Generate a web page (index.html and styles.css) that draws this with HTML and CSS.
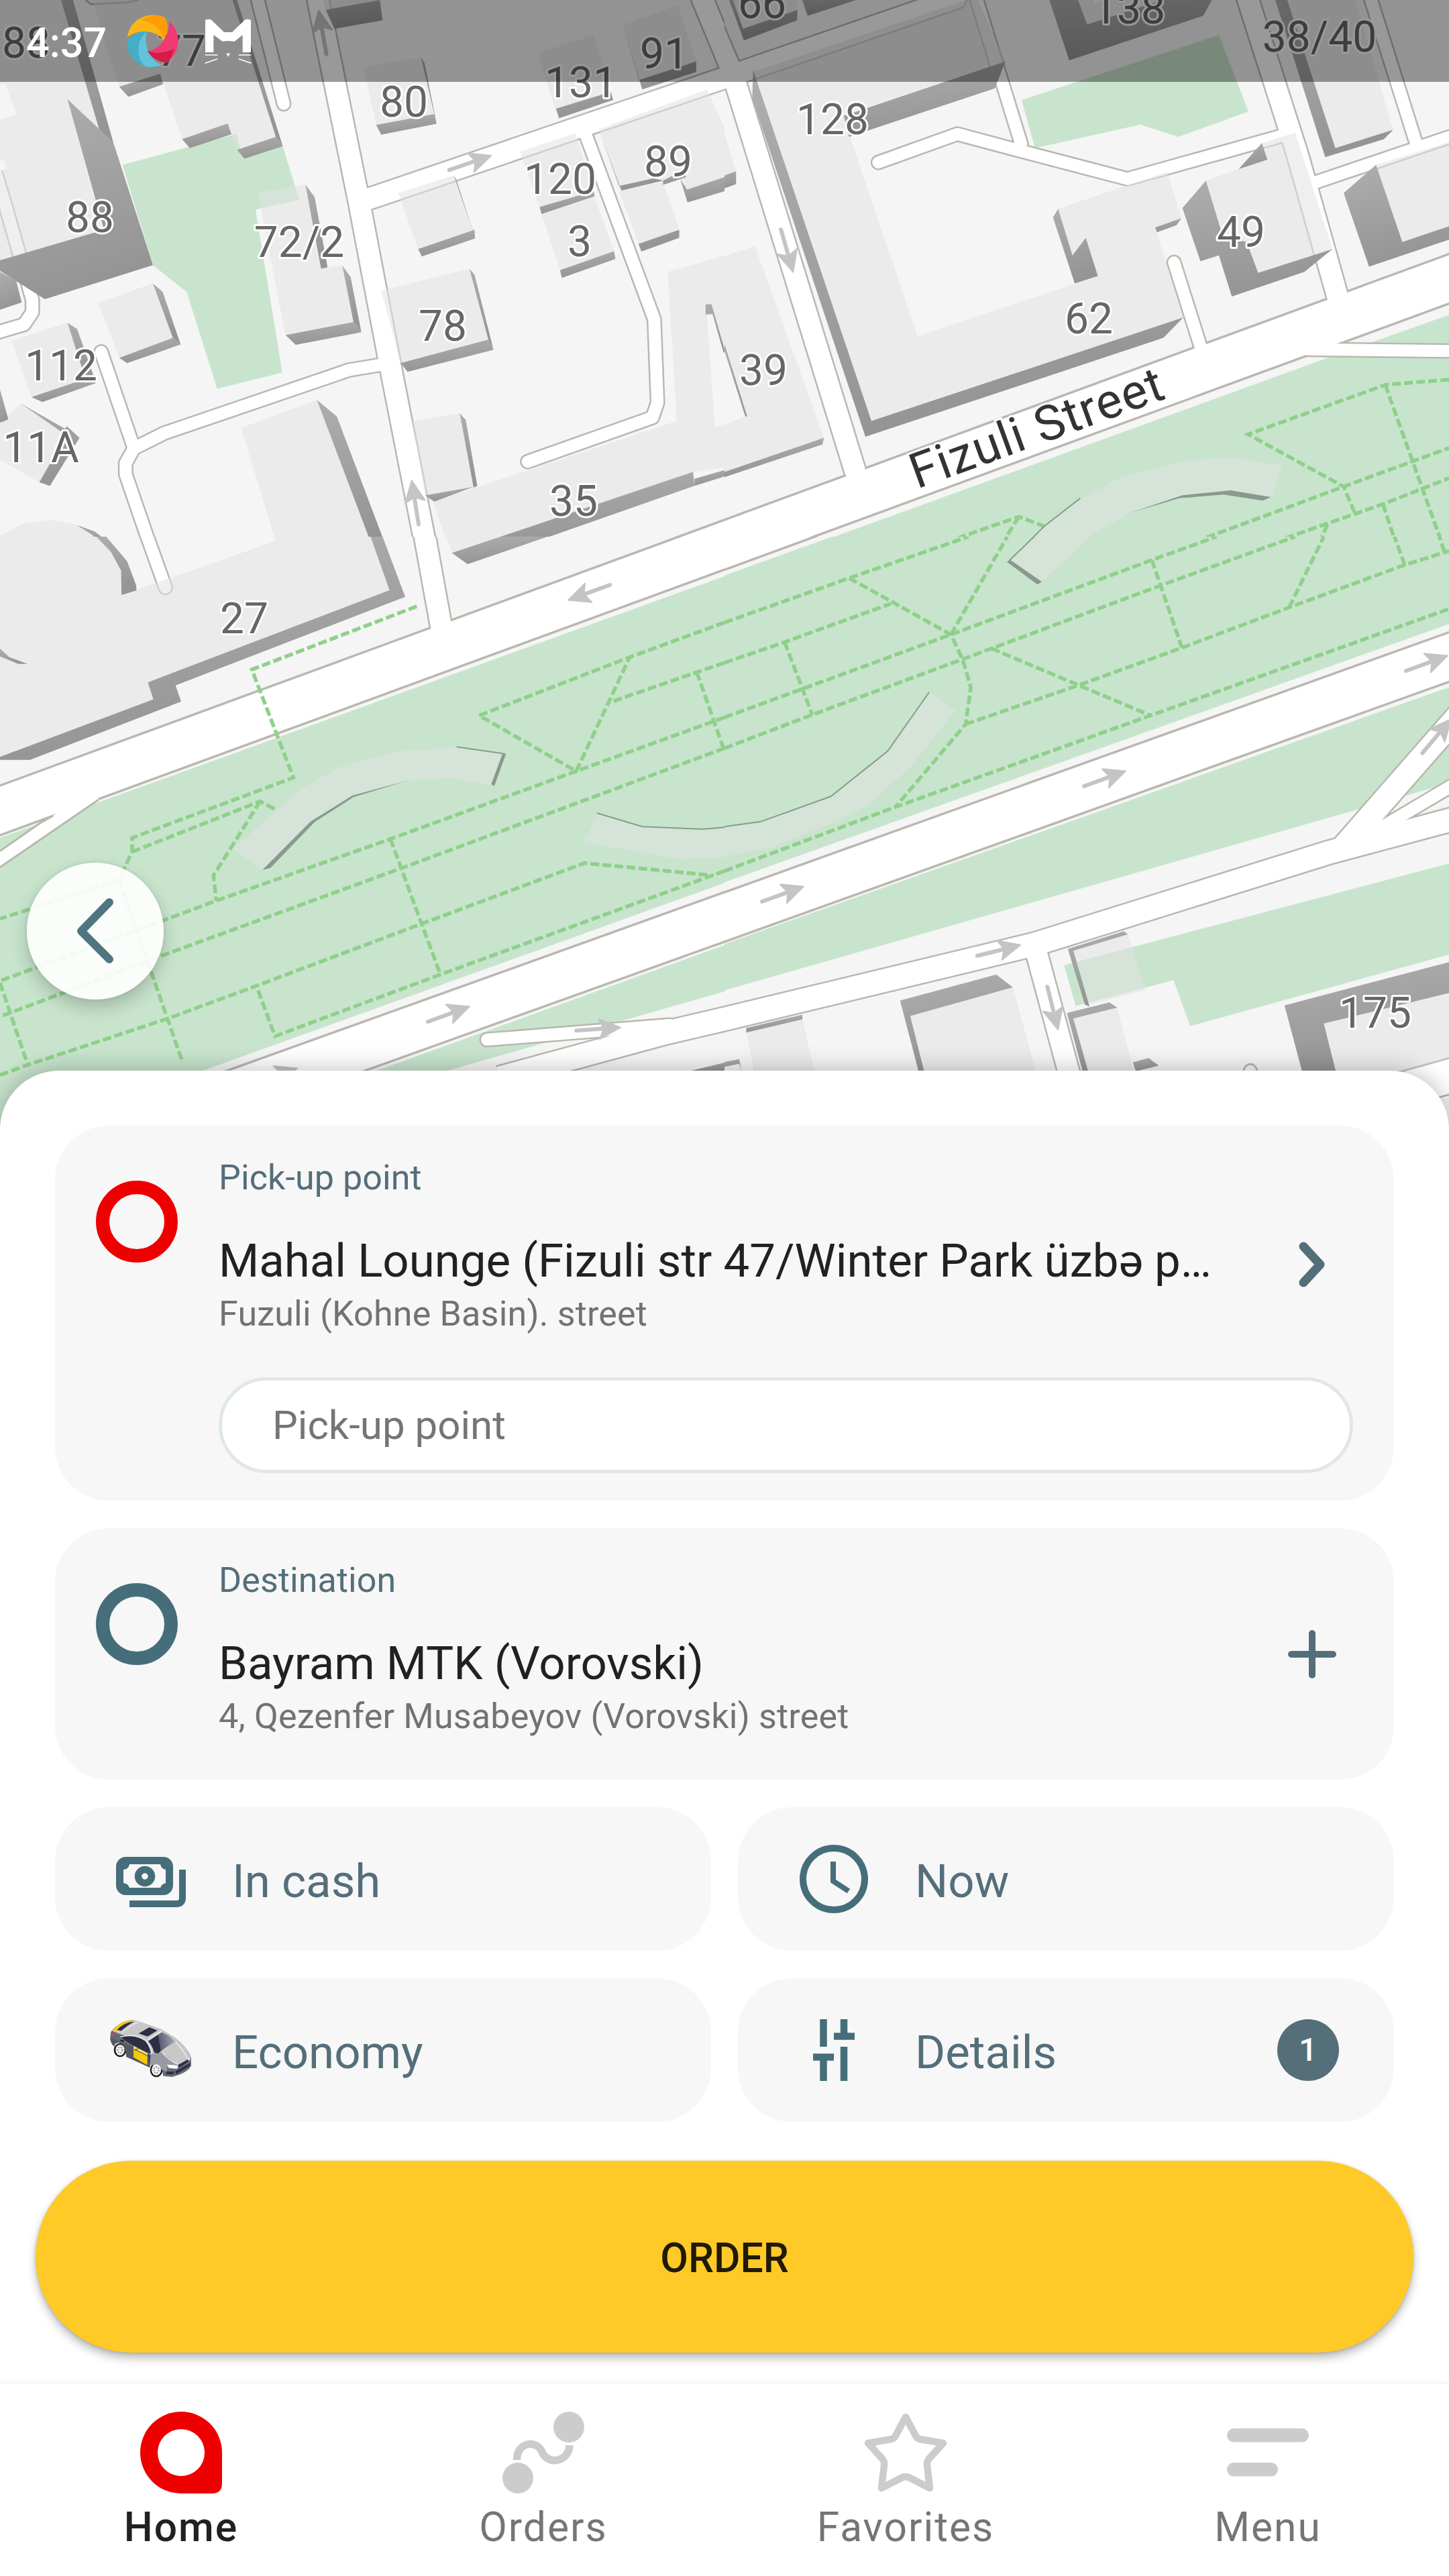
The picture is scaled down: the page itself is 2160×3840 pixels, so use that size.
FILE: index.html
```html
<!DOCTYPE html>
<html lang="en">
<head>
<meta charset="utf-8">
<title>Order a taxi</title>
<link rel="stylesheet" href="styles.css">
</head>
<body>
<div class="screen">
  <section class="map">
    <svg class="map-canvas" width="2160" height="1700" viewBox="0 0 2160 1700">
      <defs>
        <linearGradient id="wall" x1="0" y1="0" x2=".25" y2="1">
          <stop offset="0" stop-color="#aeaeae"/><stop offset="1" stop-color="#959595"/>
        </linearGradient>
        <g id="arrow">
          <path d="M-32 0H10" stroke="#c4c4c4" stroke-width="6" stroke-linecap="round"/>
          <path d="M34 0L2 -15L9 0L2 15Z" fill="#c4c4c4" stroke="#c4c4c4" stroke-width="2" stroke-linejoin="round"/>
        </g>
        <g id="nw-roads">
          <path class="mid" d="M686 -15L777 575L845 1045L928 1600M800 566L1588 213L1518 -10"/>
          <path class="minor" d="M556 -10L614 296M1268 385L1416 910L1423 1148L1412 1190L1142 1316M845 1035L755 1055L355 1235L290 1278L272 1320V1352L334 1590M290 1278L219 1003M-20 953L52 925L70 890V855L15 600L-10 490"/>
          <path class="major" d="M0 2310L3136 795"/>
        </g>
        <g id="ne-roads">
          <path class="mid" d="M-60 -30L20 220L282 1340M-60 249L500 -5M1132 -5L1240 440L1332 870"/>
          <path class="minor" d="M546 0L642 410M333 463L504 382L640 430L872 510L1225 380M1260 528L1590 381M1397 -10L1496 405M973 748L1032 995"/>
          <path class="major" d="M-1568 2310L1590 784"/>
          <path class="minor" d="M1262 996L1600 1001"/>
        </g>
        <g id="sw-roads">
          <path class="mid" d="M918 -10L955 240"/>
          <path class="minor" d="M310 -30L358 135M1054 1336L1450 1297"/>
          <path class="major" d="M-60 754L3136 -684M1600 996L-40 1718"/>
          <path class="wide" d="M1600 1272L1440 1318L1080 1438"/>
        </g>
        <g id="se-roads">
          <path class="minor" d="M1370 810L1590 650"/>
          <path class="mid" d="M672 1090L748 1435"/>
          <path class="wide" d="M-20 1287L670 1083L1310 838L1590 746M1335 830L1600 458"/>
          <path class="major" d="M-80 58L200 -68M-20 1019L1590 310"/>
        </g>
      </defs>

      <!-- north-west tile -->
      <svg width="1080" height="820" viewBox="0 0 1568 1568" preserveAspectRatio="none">
        <rect class="land" width="1568" height="1568"/>
        <path class="park" d="M265 470L512 382L520 425L612 418L648 570L553 597L611 1062L470 1108L404 832L331 756Z"/>
        <use class="casing" href="#nw-roads"/><use class="road" href="#nw-roads"/>
        <path class="edge" d="M185 0L197 12L275 7L300 0"/>
        <g class="roof">
          <path d="M-5 -5H132L216 375L146 283L222 655L0 742Z"/>
          <path d="M200 0H503L597 390L513 427L493 352L394 397L347 210L258 247Z"/>
          <path d="M787 192L911 163L940 327L814 356ZM700 0H820L705 28Z"/>
          <path d="M1164 152L1284 100L1322 262L1203 310ZM1348 72L1467 15L1507 175L1383 228Z"/>
          <path d="M1297 368L1530 255L1580 400V505L1487 540L1472 505L1435 518L1340 540ZM1340 543L1435 520L1470 655L1382 695Z"/>
          <path d="M1125 432L1245 380L1285 545L1168 590ZM1172 610L1287 562L1329 716L1212 770Z"/>
          <path d="M862 550L982 500L1025 657L905 710ZM825 829L1016 766L1058 970L867 1035Z"/>
          <path d="M558 549L661 526L697 765L741 757L765 920L618 955Z"/>
          <path d="M213 863L331 808L374 963L258 1020ZM25 972L146 920L185 1080L68 1132Z"/>
          <path d="M45 1150L140 1222V1240L85 1375L0 1310V1210Z"/>
          <path d="M522 1220L686 1140L812 1580L606 1590L597 1545L540 1568L535 1580L605 1580Z"/>
          <path d="M-5 1530L50 1493L108 1482L165 1496L200 1525L235 1580H-5Z"/>
          <path d="M893 1200L995 1178L1025 1388L920 1412Z"/>
          <path d="M938 1430L1465 1200L1445 775L1580 725V1330L1500 1345L975 1580Z"/>
        </g>
        <path class="land" d="M0 240H12L35 325L0 342ZM0 455H8L15 483L0 487ZM1530 895H1545L1580 1060V1205L1547 1217Z"/>
        <g class="wall">
          <path d="M132 0H158L245 405L216 375Z"/>
          <path d="M146 283L245 405L331 756L97 853L0 772V742L225 655Z"/>
          <path d="M0 775L35 800L47 862L0 883Z"/>
          <path d="M258 247L347 210L353 240L278 276Z"/><path d="M394 397L493 352L501 383L411 422Z"/>
          <path d="M503 0H513L612 417L597 390Z"/><path d="M513 427L597 390L612 417L529 452Z"/>
          <path d="M705 28L822 0L828 58L724 82Z"/>
          <path d="M911 163L919 180L945 353L940 325Z"/><path d="M814 356L940 325L945 353L825 384Z"/>
          <path d="M1164 152L1203 310L1322 262L1327 285L1210 337Z"/>
          <path d="M1348 72L1383 228L1507 175V205L1390 255Z"/>
          <path d="M1297 372L1340 530L1415 508L1435 515L1345 543Z"/>
          <path d="M1435 515L1480 485L1485 505L1435 527Z"/>
          <path d="M1472 510L1487 540L1568 505V545L1488 577Z"/>
          <path d="M1340 540L1382 695L1470 655V678L1388 717Z"/>
          <path d="M1168 590L1285 545L1287 560L1172 610Z"/><path d="M1212 770L1329 716L1332 738L1216 792Z"/>
          <path d="M982 500L988 512L1028 680L1023 657Z"/><path d="M905 710L1027 655L1028 680L913 731Z"/>
          <path d="M1016 766L1027 783L1068 997L1057 968Z"/><path d="M867 1035L1057 968L1068 997L882 1060Z"/>
          <path d="M661 526L681 562L709 762L695 766Z"/><path d="M741 757L759 790L782 947L765 918Z"/><path d="M618 955L765 918L782 947L640 983Z"/>
          <path d="M331 808L352 832L391 982L374 963Z"/><path d="M258 1020L374 963L391 982L275 1035Z"/>
          <path d="M146 920L167 938L208 1092L185 1080Z"/><path d="M68 1132L185 1080L208 1092L92 1146Z"/>
          <path d="M0 1110L18 1195L0 1205Z"/>
          <path d="M45 1150L140 1222L145 1215L172 1248L108 1385L85 1375L143 1240Z"/>
          <path d="M686 1140L729 1187L842 1580H812Z"/><path d="M165 1496L205 1515L235 1545L262 1580H232L200 1525Z"/>
          <path d="M995 1178L1008 1197L1033 1385L1025 1390Z"/><path d="M920 1412L1025 1388L940 1430Z"/>
          <path d="M1500 1345L1503 1385L1080 1580H970Z"/><path d="M1503 1385V1365L1568 1340V1358Z"/>
          <path d="M1527 867H1540L1570 1005H1566L1542 895L1527 897Z"/>
        </g>
      </svg>

      <!-- north-east tile -->
      <svg x="1080" width="1080" height="820" viewBox="0 0 1568 1568" preserveAspectRatio="none">
        <rect class="land" width="1568" height="1568"/>
        <path class="park" d="M643 285L1070 100L1134 318L982 390L900 355L672 422ZM158 1568L1310 1018L1580 892V1568Z"/>
        <use class="casing" href="#ne-roads"/><use class="road" href="#ne-roads"/>
        <g class="trail">
          <path d="M430 1568L637 1473L692 1500M637 1473L592 1568M1568 1082L1430 1097L1133 1238L1340 1387L1365 1465M1430 1097L1558 1568M970 1568L1340 1387L1568 1277M1140 1568L1425 1437L1568 1363M1305 1495L1280 1568M1425 1437L1458 1568"/>
        </g>
        <g class="roof">
          <path d="M62 205L545 -10L608 175L255 328L272 390L312 548L418 958L808 787L782 678L752 730L722 595L958 490L989 622L932 648L993 905L318 1200L62 260Z"/>
          <path d="M1042 515L1113 482L1175 455L1163 408L1235 378L1316 710L1155 778L1130 690L1078 672Z"/>
          <path d="M1410 470L1568 405V645L1467 690ZM1218 0H1365L1447 370L1322 422ZM765 0H970L785 70ZM15 0H155L158 28L40 82Z"/>
          <path d="M0 380L25 488L0 500ZM-5 732L66 702L215 1248L0 1345Z"/>
          <path d="M640 1568L692 1500L780 1415L860 1360L985 1315L1100 1303L1207 1327L1187 1415L1095 1398L990 1412L875 1465L800 1520L762 1568Z"/>
        </g>
        <path class="land" d="M0 985L47 1187L0 1210Z"/>
        <g class="wall">
          <path d="M62 200L60 280L305 1245L950 963L993 905L318 1200Z"/>
          <path d="M258 330L608 175L585 252L270 390Z"/>
          <path d="M722 595L711 620L758 808L808 787L782 678L753 728Z"/>
          <path d="M932 648L989 622L978 642L936 662Z"/>
          <path d="M1163 408L1175 455L1113 482Z"/>
          <path d="M1042 515L991 593L1030 745L1070 728L1098 845L1255 775L1316 710L1155 778L1130 690L1078 672Z"/>
          <path d="M1410 470L1340 550L1395 760L1568 683V645L1467 690Z"/>
          <path d="M1192 0H1218L1322 422L1447 370L1427 397L1300 448Z"/>
          <path d="M703 0H765L785 70L960 -5H1057L1036 45L746 172Z"/>
          <path d="M10 0H18L40 82L158 28L157 58L42 115Z"/><path d="M168 0H285L180 45Z"/>
          <path d="M0 500L25 488V525L0 537Z"/><path d="M0 1345L215 1248L212 1267L0 1360Z"/><path d="M0 980L49 1187H45L0 1000Z"/>
        </g>
        <path class="shade" d="M875 1463L990 1412L1095 1398L1183 1417L1165 1427L1080 1410L985 1420Z"/>
        <path class="hairline" d="M640 1568L692 1500L770 1420"/>
      </svg>

      <!-- south-west tile -->
      <svg y="800" width="1080" height="880" viewBox="0 0 1568 1568" preserveAspectRatio="none">
        <rect class="land" width="1568" height="1568"/>
        <path class="park" d="M0 800L1568 105V920L435 1420L350 1568H0ZM1568 1085L800 1425H950L1568 1208Z"/>
        <use class="casing" href="#sw-roads"/><use class="road" href="#sw-roads"/>
        <path class="road-fill" d="M215 696L0 877V835L88 760L118 738L160 690Z"/>
        <path class="edge" d="M213 699L0 878M115 741L85 762L0 835"/>
        <g class="trail">
          <path d="M902 185L545 353L635 640L286 800V835L258 912L0 1015M286 837L563 703L600 727M563 703L462 900L468 967M1568 480L1247 623L845 803L468 967L0 1180M1568 562L870 880L350 1113L0 1275M1568 228L1363 320L1037 475L1247 623L1363 320M1568 335L1508 360L1320 440M1508 360L1568 570M845 803L913 1030L953 1163M0 1430L60 1403L363 1280L555 1193L913 1028L1265 867L1545 900M1568 888L953 1163L595 1327L555 1193M258 912L395 1395M0 1185L60 1403"/>
        </g>
        <g class="roof">
          <path d="M0 0H208L240 40L262 90L263 155L595 12L592 0H802L843 142L320 387L332 432L0 585V318L40 338H60L20 320L0 297Z"/>
          <path d="M966 0H1083L978 43Z"/>
          <path d="M503 830L600 725L650 670L735 612L860 570L990 558L1093 577L1065 660L975 643L885 648L762 690L675 757L568 885Z"/>
          <path d="M1295 735L1390 770L1520 777L1568 772V852L1470 857L1263 812Z"/>
        </g>
        <g class="wall">
          <path d="M802 0H828L877 160L380 395L392 438L65 593H0V585L332 432L320 387L843 142Z"/>
          <path d="M208 0H230L275 65L295 130V143L263 155L262 90L240 40Z"/>
          <path d="M0 297L20 320L60 338H40L0 318Z"/>
          <path d="M978 43L1083 0H1185L1012 73Z"/><path d="M1490 1420L1568 1397V1420Z"/>
        </g>
        <path class="shade" d="M1087 578L1095 577L1070 662L1063 658ZM568 885L672 757L762 688L885 647L765 692L682 757L585 880Z"/>
        <path class="hairline" d="M988 558L1093 577M1292 734L1390 770L1520 777L1568 772"/>
      </svg>

      <!-- south-east tile -->
      <svg x="1080" y="800" width="1080" height="880" viewBox="0 0 1568 1568" preserveAspectRatio="none">
        <rect class="land" width="1568" height="1568"/>
        <path class="park" d="M0 103L233 0H1568V232L0 918ZM0 1082L1568 400V655L1350 732L0 1205ZM735 1138L1568 868V1110L1008 1300L972 1178L760 1247Z"/>
        <use class="casing" href="#se-roads"/><use class="road" href="#se-roads"/>
        <path class="road-fill" d="M1450 1425L1568 1385V1490L1540 1495Z"/>
        <path class="edge" d="M1450 1425L1568 1385M1545 1490L1568 1482M1123 1425C1123 1393 1153 1393 1153 1425"/>
        <g class="trail">
          <path d="M0 228L270 110L528 0M270 110L490 260L515 325L533 400L522 498L370 718M0 335L130 280L360 178M130 280L190 473M0 480L490 260L925 62L1065 0M0 562L190 473L578 297L943 130L1235 0M490 260L612 0M578 297L922 475M522 498L770 393L990 295L1222 188L1472 75L1568 38M0 888L370 718L922 475L1568 192M925 62L990 295M1222 188L1297 0M1472 75L1450 0M1558 40L1547 0"/>
        </g>
        <g class="roof">
          <path d="M755 1100L873 1056L912 1205L790 1243ZM402 1273L624 1197L675 1425H432ZM47 1317L169 1282L195 1425H65ZM755 1280L850 1251L887 1425H787ZM1297 1293L1568 1212V1385L1450 1425H1323Z"/>
          <path d="M443 413L501 460L408 605L315 710L262 745L105 825L0 850V770L78 757L230 690L353 570Z"/>
          <path d="M618 65L670 0H792L687 120Z"/>
        </g>
        <g class="wall">
          <path d="M743 1095L864 1048L873 1056L755 1100L790 1248L780 1243Z"/>
          <path d="M380 1232L588 1163L624 1197L402 1273L432 1420H420Z"/>
          <path d="M47 1305L168 1270L169 1282L47 1317Z"/><path d="M0 1395L32 1388L37 1420L32 1400L0 1408Z"/>
          <path d="M741 1265L833 1237L850 1251L755 1280L787 1420H775Z"/>
          <path d="M884 1396L918 1385L940 1405L890 1420Z"/>
          <path d="M1212 1245L1568 1130V1212L1297 1293L1323 1420H1250Z"/>
        </g>
        <path class="shade" d="M611 67L620 63L687 120L677 127Z"/>
        <path class="hairline" d="M615 65L670 0M443 413L353 570L230 690L78 757L0 770"/>
      </svg>

      <use href="#arrow" transform="translate(481 49) rotate(-100)"/>
      <use href="#arrow" transform="translate(700 243) rotate(-19)"/>
      <use href="#arrow" transform="translate(619 750) rotate(-99)"/>
      <use href="#arrow" transform="translate(1173 373) rotate(74)"/>
      <use href="#arrow" transform="translate(879 883) rotate(160)"/>
      <use href="#arrow" transform="translate(668 1512) rotate(-20)"/>
      <use href="#arrow" transform="translate(891 1534) rotate(-4)"/>
      <use href="#arrow" transform="translate(1166 1333) rotate(-20)"/>
      <use href="#arrow" transform="translate(1646 1161) rotate(-20)"/>
      <use href="#arrow" transform="translate(2126 989) rotate(-20)"/>
      <use href="#arrow" transform="translate(1488 1417) rotate(-14)"/>
      <use href="#arrow" transform="translate(1569 1502) rotate(76)"/>
      <use href="#arrow" transform="translate(2141 1098) rotate(-50)"/>
      <use href="#arrow" transform="translate(411 1604) rotate(-20)"/>

      <g class="house">
        <text x="39" y="86">88</text><text x="271" y="98">77</text><text x="602" y="174">80</text>
        <text x="866" y="145">131</text><text x="990" y="102">91</text><text x="835" y="289">120</text>
        <text x="996" y="263">89</text><text x="134" y="346">88</text><text x="446" y="383">72/2</text>
        <text x="864" y="382">3</text><text x="660" y="508">78</text><text x="91" y="567">112</text>
        <text x="61" y="689">11A</text><text x="855" y="769">35</text><text x="1136" y="27">66</text>
        <text x="1683" y="35">138</text><text x="1967" y="77">38/40</text><text x="1241" y="200">128</text>
        <text x="1850" y="368">49</text><text x="1623" y="497">62</text><text x="1138" y="574">39</text>
        <text x="364" y="944">27</text><text x="2050" y="1532">175</text>
      </g>
      <text class="street" transform="translate(1367 729) rotate(-20)" textLength="397">Fizuli Street</text>
    </svg>

    <header class="status">
      <span class="time">4:37</span>
      <svg width="78" height="78" viewBox="57 36 234 234">
        <path d="M60 135C68 62 148 16 228 48C246 80 240 122 223 150C190 106 116 96 60 135Z" fill="#fdb515"/>
        <path d="M120 62C170 66 214 96 223 150C240 122 246 80 228 48C190 34 150 40 120 62Z" fill="#fd9c07"/>
        <path d="M58 158C78 122 112 108 148 112C132 160 150 232 213 262C130 290 58 236 58 158Z" fill="#46adc9"/>
        <path d="M148 112C104 140 92 222 138 266C164 272 190 270 213 262C150 232 132 160 148 112Z" fill="#62c3dc"/>
        <path d="M247 64C302 116 302 196 238 250C204 250 170 230 149 198C206 190 248 138 247 64Z" fill="#f03a70"/>
        <path d="M149 198C192 214 240 204 268 188C262 216 252 236 238 250C204 250 170 230 149 198Z" fill="#d51c48"/>
      </svg>
      <svg class="cat" width="72" height="78" viewBox="405 36 216 234">
        <path d="M408 60Q420 54 434 58L492 114H528L586 58Q600 54 612 60V204H575V126L538 156Q510 150 486 156L445 126V204H408Z" fill="#fff"/>
        <path d="M409 216H461M409 252L461 234M611 216H559M611 252L559 234M506 211H515L510.500 219Z" stroke="#fff" stroke-width="5" fill="#fff" stroke-linecap="round"/>
      </svg>
    </header>

    <button class="back" aria-label="Back">
      <svg width="204" height="204" viewBox="0 0 204 204"><path d="M123 59L81 102L123 144"/></svg>
    </button>
  </section>

  <main class="panel">
    <section class="card">
      <span class="ring ring-red"></span>
      <div class="card-body">
        <div class="card-head">
          <div class="card-text">
            <div class="label">Pick-up point</div>
            <div class="title">Mahal Lounge (Fizuli str 47/Winter Park üzbə p…</div>
            <div class="sub">Fuzuli (Kohne Basin). street</div>
          </div>
          <svg class="act" width="80" height="80" viewBox="0 0 80 80"><path d="M26 13L51 40L26 67" stroke-width="13"/></svg>
        </div>
        <div class="field">Pick-up point</div>
      </div>
    </section>

    <section class="card card-dest">
      <span class="ring"></span>
      <div class="card-body">
        <div class="card-head">
          <div class="card-text">
            <div class="label">Destination</div>
            <div class="title">Bayram MTK (Vorovski)</div>
            <div class="sub">4, Qezenfer Musabeyov (Vorovski) street</div>
          </div>
          <svg class="act" width="80" height="80" viewBox="0 0 80 80"><path d="M8 36H70M39 5V67" stroke-width="10"/></svg>
        </div>
      </div>
    </section>

    <section class="options">
      <div class="option">
        <svg class="line" width="170" height="140" viewBox="0 0 170 140">
          <rect x="38.500" y="42.500" width="74" height="46" rx="9" stroke-width="11"/>
          <circle cx="76" cy="66" r="10" stroke-width="10.500"/>
          <path d="M44 56Q52 55 53 48H44ZM108 56Q100 55 99 48H108ZM44 76Q52 77 53 84H44ZM108 76Q100 77 99 84H108Z" fill="#456e7a" stroke="none"/>
          <path d="M132 56V98Q132 107 123 107H53" stroke-width="10"/>
        </svg>
        <span>In cash</span>
      </div>
      <div class="option">
        <svg class="line" width="170" height="140" viewBox="0 0 170 140">
          <circle cx="85" cy="70" r="46" stroke-width="10"/><path d="M84 44V73L107 88" stroke-width="8"/>
        </svg>
        <span>Now</span>
      </div>
      <div class="option">
        <svg width="170" height="140" viewBox="0 18 510 420">
          <defs><linearGradient id="glass" gradientUnits="userSpaceOnUse" x1="243" y1="200" x2="362" y2="180"><stop offset=".4" stop-color="#2d2e44"/><stop offset=".43" stop-color="#5d5e74"/><stop offset="1" stop-color="#a8a8b8"/></linearGradient></defs>
          <ellipse cx="117" cy="228" rx="28" ry="31" fill="#1b1b1b"/><ellipse cx="279" cy="317" rx="28" ry="32" fill="#1b1b1b"/>
          <path d="M75 150L80 140Q130 92 175 94L205 102L300 135L365 175Q425 225 434 262L435 298Q420 330 350 348L310 344Q302 285 262 282Q250 290 250 306L145 258Q146 205 112 195Q90 195 92 212Q74 200 73 175Z" fill="#666875"/>
          <path d="M73 172L250 245V306L145 258Q140 200 112 195Q92 195 92 212Q74 200 73 172Z" fill="#555764"/>
          <path d="M80 142Q130 92 175 94L205 102L300 135L365 175Q425 225 432 262L375 295H330L250 248Q235 180 125 160Z" fill="#c8c8c8"/>
          <path d="M255 245L305 238L375 294L330 297L325 325L250 290Z" fill="#9799a4"/>
          <path d="M83 140Q120 98 165 94L175 97Q130 108 100 144Z" fill="#f8c80a"/>
          <path d="M103 138Q130 106 180 100Q150 118 122 142Z" fill="#2d2e44"/>
          <path d="M80 148L96 164L80 166Z" fill="#e8365f"/>
          <path d="M200 154L248 126L284 140L240 167Z" fill="#2d2e44"/>
          <path d="M243 188L303 149Q340 160 362 191Q310 222 287 243L270 240Q262 210 243 188Z" fill="url(#glass)"/>
          <path d="M120 172Q180 155 228 187Q250 210 255 244Q180 215 120 172Z" fill="#2d2e44"/>
          <path d="M118 170Q180 150 232 185Q256 210 258 246M125 152Q155 120 202 102M305 238Q330 270 375 292M365 192Q400 225 416 262M240 182L303 142" fill="none" stroke="#f1f1f1" stroke-width="4"/>
          <path d="M178 210L240 243L238 295L177 260Z" fill="#f8c80a"/><path d="M178 210L240 243V254L178 225Z" fill="#ffe07a"/>
          <path d="M180 224L250 258M184 228L200 221" stroke="#2d2e44" stroke-width="3"/>
          <path d="M250 248L248 285" stroke="#2d2e44" stroke-width="3"/><path d="M118 184L134 189" stroke="#1b1b1b" stroke-width="6"/>
          <path d="M327 293L378 297L372 312L335 308Z" fill="#fff"/><path d="M418 268L430 260L428 276Z" fill="#fff"/>
          <path d="M374 296L420 272L422 280L384 305ZM325 325L362 324L352 337L322 335ZM366 322L432 285L428 300L366 337Z" fill="#2d2e44"/>
          <ellipse cx="117" cy="228" rx="20" ry="24" fill="#f4f4f4"/><ellipse cx="279" cy="317" rx="21" ry="25" fill="#f4f4f4"/>
          <g fill="none" stroke="#999" stroke-width="7" stroke-dasharray="6 5"><ellipse cx="117" cy="228" rx="10" ry="13"/><ellipse cx="279" cy="317" rx="11" ry="14"/></g>
        </svg>
        <span>Economy</span>
      </div>
      <div class="option">
        <svg class="line" width="170" height="140" viewBox="0 0 170 140">
          <path d="M69.500 24V65M100 24V50M85 49.500H116M54 80.500H85M69.500 80V116M100 65V116" stroke-width="10.500"/>
        </svg>
        <span>Details</span>
        <b class="badge">1</b>
      </div>
    </section>

    <button class="order">ORDER</button>
  </main>

  <nav class="tabs">
    <a class="tab tab-active">
      <svg width="124" height="124" viewBox="0 0 124 124"><path fill="#e00" fill-rule="evenodd" d="M62 1A61 61 0 0 0 62 123H108Q123 123 123 108V62A61 61 0 0 0 62 1ZM62 27A35 35 0 0 1 62 97A35 35 0 0 1 62 27Z"/></svg>
      <span>Home</span>
    </a>
    <a class="tab">
      <svg width="124" height="124" viewBox="0 0 124 124"><g fill="#ccc"><circle cx="100" cy="24" r="23"/><circle cx="24" cy="100" r="23"/></g><path d="M22.500 73C22.500 46 52 42 60 61C69 82 100 76 101 51" fill="none" stroke="#ccc" stroke-width="11.500"/></svg>
      <span>Orders</span>
    </a>
    <a class="tab">
      <svg width="124" height="124" viewBox="0 0 124 124"><path d="M62 9L77 37Q79 41 83 42L118 48L97 71Q93 76 94 81L98 115L67 99Q62 97 57 99L26 115L30 81Q31 76 27 71L6 48L41 42Q45 41 47 37Z" fill="none" stroke="#ccc" stroke-width="10.500" stroke-linejoin="round"/></svg>
      <span>Favorites</span>
    </a>
    <a class="tab">
      <svg width="124" height="124" viewBox="0 0 124 124"><g fill="#ccc"><rect x="1" y="26" width="122" height="20.500" rx="10"/><rect x="1" y="77" width="76" height="20.500" rx="10"/></g></svg>
      <span>Menu</span>
    </a>
  </nav>
</div>
</body>
</html>
```
FILE: styles.css
```css
* { box-sizing: border-box; }
body { margin: 0; font-family: Roboto, "Noto Sans", sans-serif; background: #fff; }
button { border: 0; padding: 0; font: inherit; }
svg { display: block; flex: none; }
.screen { width: 2160px; height: 3840px; display: flex; flex-direction: column; overflow: hidden; }

/* map */
.map { position: relative; height: 1596px; flex: none; }
.map-canvas .land { fill: #f5f5f5; }
.map-canvas .park { fill: #c8e4cd; }
.major, .mid, .minor, .wide { fill: none; stroke-linejoin: round; vector-effect: non-scaling-stroke; }
.mid, .minor { stroke-linecap: round; }
.casing { --grow: 5px; stroke: #b9b8b0; }
.road { --grow: 0px; stroke: #fff; }
.major { stroke-width: calc(66px + var(--grow) * 1.4); }
.wide { stroke-width: calc(34px + var(--grow)); }
.mid { stroke-width: calc(31px + var(--grow)); }
.minor { stroke-width: calc(18px + var(--grow)); }
.road-fill { fill: #fff; }
.edge { fill: none; stroke: #b9b8b0; stroke-width: 3px; vector-effect: non-scaling-stroke; }
.roof { fill: #e1e1e1; fill-opacity: .55; }
.wall path { fill: url(#wall); }
.shade { fill: #8a998d; }
.hairline { fill: none; stroke: #82a086; stroke-width: 2px; vector-effect: non-scaling-stroke; }
.trail path { fill: none; stroke: #8fd08a; stroke-width: 5.5px; stroke-dasharray: 13px 5px; vector-effect: non-scaling-stroke; }
.house { font-size: 64px; text-anchor: middle; fill: #666; stroke: #fff; stroke-width: 6px; paint-order: stroke; stroke-linejoin: round; }
.street { font-size: 73px; fill: #333; stroke: #fff; stroke-width: 6px; paint-order: stroke; }

.status { position: absolute; inset: 0 0 auto 0; height: 122px; display: flex; align-items: flex-start; padding: 22px 0 0 39px; background: rgba(0, 0, 0, .4); color: #fff; }
.time { width: 150px; font-size: 61px; line-height: 84px; font-weight: 500; }
.cat { margin-left: 38px; }

.back { position: absolute; left: 40px; top: 1286px; width: 204px; height: 204px; border-radius: 50%; background: rgba(255, 255, 255, .9); box-shadow: 0 12px 26px rgba(0, 0, 0, .2), 0 0 6px rgba(0, 0, 0, .08); }
.back path { fill: none; stroke: #4f7680; stroke-width: 12; stroke-linecap: round; stroke-linejoin: round; }

/* order panel */
.panel { position: relative; height: 1958px; flex: none; padding: 82px 82px 0; display: flex; flex-direction: column; gap: 41px; background: #fff; border-radius: 88px 88px 0 0; box-shadow: 0 0 36px rgba(0, 0, 0, .28); }
.card { display: flex; gap: 61px; height: 559px; padding: 48px 61px 0; background: #f7f7f7; border-radius: 80px; }
.card-dest { height: 375px; }
.ring { flex: none; width: 122px; height: 122px; margin-top: 34px; border: 20.5px solid #456e7a; border-radius: 50%; }
.ring-red { border-color: #e00; }
.card-body { flex: 1; }
.card-head { display: flex; }
.card-text { flex: 1; white-space: nowrap; }
.label, .sub { font-size: 52px; line-height: 60px; }
.label { color: #546e7a; letter-spacing: .1px; }
.sub { margin-top: 9px; color: #727272; letter-spacing: .2px; }
.title { margin-top: 54px; font-size: 69px; line-height: 80px; color: #212121; }
.act { margin: 119px 20px 0 0; }
.card-dest .act { margin-top: 104px; }
.act path { fill: none; stroke: #546e7a; stroke-linecap: round; stroke-linejoin: round; }
.field { height: 143px; margin-top: 64px; padding-left: 75px; border: 5px solid #e0e7e9; border-radius: 72px; background: #fff; font-size: 60px; line-height: 133px; color: #757575; }

.options { display: grid; grid-template-columns: 978px 978px; gap: 41px 40px; }
.option { display: flex; align-items: center; height: 214px; padding: 0 82px 0 58px; border-radius: 80px; background: #f7f7f7; font-size: 69px; color: #546e7a; }
.option span { margin-left: 36px; padding-top: 6px; flex: 1; }
.line { fill: none; stroke: #456e7a; }
.badge { width: 92px; height: 92px; border-radius: 50%; background: #546e7a; color: #fff; font-size: 48px; font-weight: 500; line-height: 92px; text-align: center; }

.order { height: 286px; flex: none; margin: 17px -29px 0; border-radius: 143px; background: #ffc928; color: #1f1a05; font-size: 60.5px; font-weight: 500; padding-top: 5px; box-shadow: 0 8px 14px rgba(0, 0, 0, .27), 0 1px 4px rgba(0, 0, 0, .15); }

/* bottom navigation */
.tabs { position: relative; height: 286px; flex: none; display: grid; grid-template-columns: repeat(4, 1fr); background: #fff; box-shadow: 0 -2px 8px rgba(0, 0, 0, .06); }
.tab { display: flex; flex-direction: column; align-items: center; gap: 15px; padding-top: 40px; font-size: 60.5px; line-height: 70px; letter-spacing: 2px; color: #757575; }
.tab-active { color: #212121; font-weight: 500; }
```
